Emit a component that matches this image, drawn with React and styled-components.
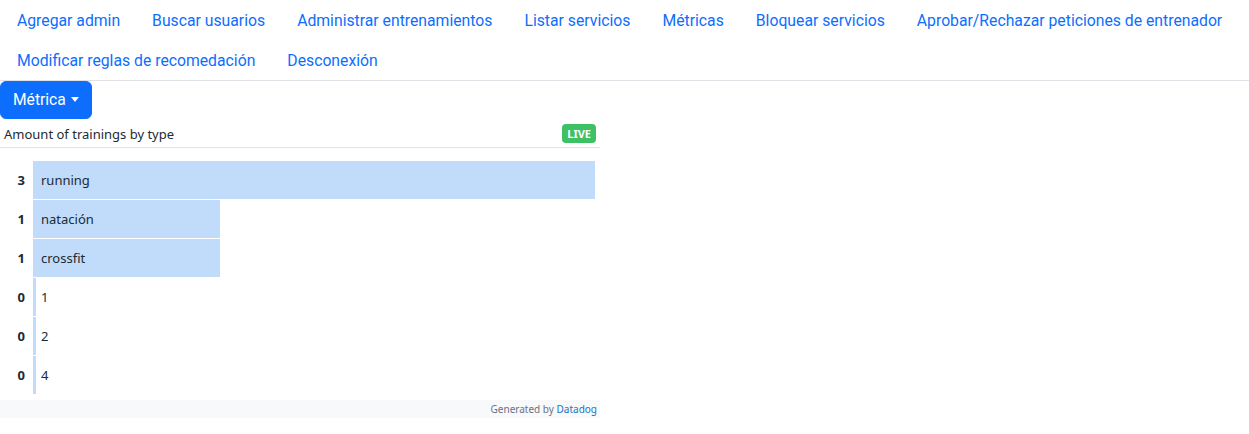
import styled, { createGlobalStyle } from "styled-components";

const GlobalStyle = createGlobalStyle`
  body {
    margin: 0;
    font-family: Roboto, "Liberation Sans", sans-serif;
    background: #fff;
    color: #212529;
  }
`;

const links = [
  "Agregar admin",
  "Buscar usuarios",
  "Administrar entrenamientos",
  "Listar servicios",
  "Métricas",
  "Bloquear servicios",
  "Aprobar/Rechazar peticiones de entrenador",
  "Modificar reglas de recomedación",
  "Desconexión",
];

const data = [
  { value: 3, label: "running" },
  { value: 1, label: "natación" },
  { value: 1, label: "crossfit" },
  { value: 0, label: "1" },
  { value: 0, label: "2" },
  { value: 0, label: "4" },
];

const App = () => {
  const max = Math.max(...data.map((d) => d.value));

  return (
    <>
      <GlobalStyle />
      <Nav>
        {links.map((l) => (
          <NavLink key={l} href="#">
            {l}
          </NavLink>
        ))}
      </Nav>
      <DropButton>Métrica</DropButton>
      <Widget>
        <Header>
          <Title>Amount of trainings by type</Title>
          <Live>LIVE</Live>
        </Header>
        <Chart>
          {data.map((d) => (
            <Row key={d.label}>
              <Value>{d.value}</Value>
              <BarTrack>
                <Bar style={{ width: d.value ? `${(d.value / max) * 100}%` : "3px" }} />
                <Label>{d.label}</Label>
              </BarTrack>
            </Row>
          ))}
        </Chart>
        <Footer>
          Generated by <Brand>Datadog</Brand>
        </Footer>
      </Widget>
    </>
  );
};

const Nav = styled.nav`
  display: flex;
  flex-wrap: wrap;
  border-bottom: 1px solid #dee2e6;
  padding-left: 1px;
`;

const NavLink = styled.a`
  display: block;
  padding: 9px 16px 7px 16px;
  font-size: 15.75px;
  line-height: 24px;
  color: #0d6efd;
  text-decoration: none;
`;

const DropButton = styled.button`
  display: inline-flex;
  align-items: center;
  gap: 5px;
  margin: 0;
  height: 38px;
  padding: 6px 12px;
  font-family: inherit;
  font-size: 15.6px;
  color: #fff;
  background: #0d6efd;
  border: 1px solid #0d6efd;
  border-radius: 6px;
  &::after {
    content: "";
    border-top: 5px solid #fff;
    border-left: 4px solid transparent;
    border-right: 4px solid transparent;
    margin-top: -2px;
  }
`;

const Widget = styled.div`
  width: 600px;
  margin-top: 4px;
  font-family: "Noto Sans", sans-serif;
`;

const Header = styled.div`
  display: flex;
  justify-content: space-between;
  align-items: center;
  height: 24px;
  padding: 0 4px 0 4px;
  border-bottom: 1px solid #e2e2ea;
`;

const Title = styled.span`
  font-size: 13px;
  color: #1c2b34;
  margin-top: -3px;
`;

const Live = styled.span`
  background: #3ec164;
  color: #fff;
  font-size: 11px;
  font-weight: 700;
  line-height: 19px;
  padding: 0 5px;
  border-radius: 4px;
  margin-top: -4px;
`;

const Chart = styled.div`
  padding: 13px 5px 5px 0;
  display: flex;
  flex-direction: column;
  gap: 1px;
`;

const Row = styled.div`
  display: flex;
  align-items: stretch;
  height: 38px;
`;

const Value = styled.span`
  width: 33px;
  padding-right: 8px;
  box-sizing: border-box;
  text-align: right;
  font-size: 13px;
  font-weight: 700;
  line-height: 38px;
  color: #1c2b34;
`;

const BarTrack = styled.div`
  position: relative;
  flex: 1;
`;

const Bar = styled.div`
  height: 100%;
  background: #c0dcfa;
`;

const Label = styled.span`
  position: absolute;
  left: 8px;
  top: 0;
  font-size: 13px;
  line-height: 38px;
  color: #1c2b34;
`;

const Footer = styled.div`
  background: #f8f9fb;
  text-align: right;
  font-size: 10px;
  line-height: 18px;
  padding-right: 3px;
  margin-top: 1px;
  color: #6c7180;
`;

const Brand = styled.span`
  color: #1c75bc;
`;

export default App;
